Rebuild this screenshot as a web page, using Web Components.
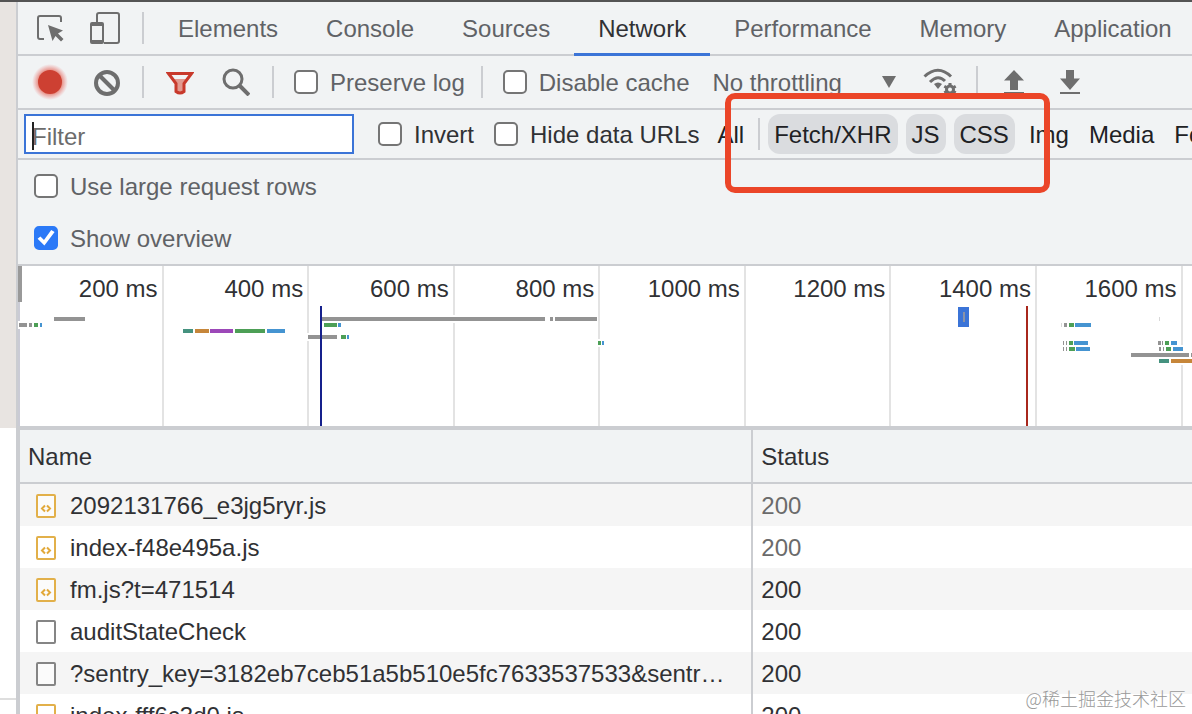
<!DOCTYPE html>
<html lang="en">
<head>
<meta charset="utf-8">
<title>Network</title>
<style>
    body {
        margin: 0;
        height: 100vh;
        overflow: hidden;
        background: #fff;
        font: 24px/28px "Liberation Sans", "Noto Sans CJK SC", sans-serif;
        color: #303134;
        --panel: #f1f3f4;
        --line: #cbcdd1;
        --muted: #606266;
        --icon: #6e6e6e;
        --blue: #3b74d7;
    }
</style>
</head>
<body>
<dev-tools></dev-tools>

<script>
class BaseElement extends HTMLElement {

    rendered = false

    connectedCallback() {
        if (!this.rendered) {
            this.attachShadow({mode: 'open'});
            this.shadowRoot.innerHTML = this.render();
            this.rendered = true;
        }
    }
}

// drawings for <tool-icon name="...">: [width, height, markup]
const ICONS = {
    inspect: [28, 28, `
        <path d="M25 8V4a2 2 0 0 0-2-2H4a2 2 0 0 0-2 2v19a2 2 0 0 0 2 2h4" fill="none" stroke="currentColor" stroke-width="2"/>
        <path d="M12 11l15 5.500-5 3 5.500 5.500-2.500 2.500-5.500-5.500-3 5z" fill="currentColor"/>`],
    device: [32, 32, `
        <path d="M7 11V3a2 2 0 0 1 2-2h18a2 2 0 0 1 2 2v26a2 2 0 0 1-2 2H14" fill="none" stroke="currentColor" stroke-width="2"/>
        <path d="M2 10h10a2 2 0 0 1 2 2v18a2 2 0 0 1-2 2H2a2 2 0 0 1-2-2V12a2 2 0 0 1 2-2zm0 4v14h10V14z" fill="currentColor" fill-rule="evenodd"/>`],
    record: [36, 36, `
        <defs><radialGradient id="g"><stop offset=".66" stop-color="#e0503f" stop-opacity=".6"/><stop offset="1" stop-color="#e66" stop-opacity="0"/></radialGradient></defs>
        <circle cx="18" cy="18" r="18" fill="url(#g)"/>
        <circle cx="18" cy="18" r="12" fill="#cd4032"/>`],
    clear: [28, 28, `
        <g fill="none" stroke="currentColor" stroke-width="4"><circle cx="15" cy="15" r="11"/><path d="M7 7l16 16"/></g>`],
    filter: [28, 28, `
        <path d="M8 11h12l-3 4v8q-3 2-6 0v-8z" fill="#e29a90"/>
        <path d="M2.500 5.500h23l-7.500 10v8q-4 3-8 0v-8z" fill="none" stroke="#c8392b" stroke-width="3"/>`],
    search: [28, 28, `
        <g fill="none" stroke="currentColor"><circle cx="11" cy="11" r="9" stroke-width="3"/><path d="M17 17l10 10" stroke-width="4"/></g>`],
    wifi: [34, 28, `
        <g fill="none" stroke="currentColor" stroke-width="3">
            <path d="M1.500 8.500Q15-4 28 8.500"/><path d="M7 14Q15 6 22 13"/>
            <circle cx="27" cy="21.500" r="3.500"/>
            <path d="M27 15v3M27 25v3M21.300 18.300l2.200 1.200M30.500 23.500l2.200 1.200M21.300 24.700l2.200-1.200M30.500 19.500l2.200-1.200"/>
        </g>
        <path d="M11 16q4-3 8 0l-4 5z" fill="currentColor"/>`],
    upload: [22, 28, `
        <path d="M11 2l10 10.500h-6V22H7v-9.500H1zM1 24h20v2H1z" fill="currentColor"/>`],
    download: [22, 28, `
        <path d="M7 2h8v8.500h6L11 22 1 10.500h6zM1 24h20v2H1z" fill="currentColor"/>`],
    script: [20, 24, `
        <rect x="1" y="1" width="18" height="22" rx="1" fill="#fff" fill-opacity=".6" stroke="#e2b04a" stroke-width="2"/>
        <path d="M9 11.500l-3 3 3 3M11 11.500l3 3-3 3" fill="none" stroke="#e2a93a" stroke-width="2"/>`],
    file: [20, 24, `
        <rect x="1" y="1" width="18" height="22" rx="1" fill="#fff" fill-opacity=".6" stroke="#858585" stroke-width="2"/>`],
};

class ToolIcon extends BaseElement {
    render() {
        const [width, height, markup] = ICONS[this.getAttribute('name')];
        return `
            <style>
                :host { display: inline-flex; }
                svg { display: block; }
            </style>
            <svg width="${width}" height="${height}" viewBox="0 0 ${width} ${height}" aria-hidden="true">${markup}</svg>
        `;
    }
}

class ToolButton extends BaseElement {
    render() {
        return `
            <style>
                :host { display: flex; flex: none; color: var(--icon); }
                button {
                    display: flex; align-items: center; justify-content: center;
                    width: 40px; height: 40px; padding: 0;
                    border: 0; background: none; color: inherit;
                }
            </style>
            <button type="button" aria-label="${this.getAttribute('label')}">
                <tool-icon name="${this.getAttribute('icon')}"></tool-icon>
            </button>
        `;
    }
}

class CheckBox extends BaseElement {
    render() {
        return `
            <style>
                :host { display: flex; flex: none; }
                label { display: flex; align-items: center; gap: 12px; white-space: nowrap; }
                span { padding-top: 2px; }
                input {
                    appearance: none; box-sizing: border-box; flex: none;
                    width: 24px; height: 24px; margin: 0;
                    border: 2px solid #757575; border-radius: 5px; background: #fff;
                }
                input:checked { border-color: #2b79f7; background: #2b79f7; }
                input:checked::before {
                    content: ""; display: block; height: 20px; background: #fff;
                    clip-path: polygon(8% 54%, 22% 43%, 40% 60%, 76% 10%, 93% 20%, 42% 88%);
                }
            </style>
            <label><input type="checkbox" ${this.hasAttribute('checked') ? 'checked' : ''}><span><slot></slot></span></label>
        `;
    }
}

class ToolDivider extends BaseElement {
    render() {
        return `<style>:host { display: block; flex: none; width: 2px; height: 32px; background: var(--line); }</style>`;
    }
}

class PanelTab extends BaseElement {
    render() {
        return `
            <style>
                :host { display: flex; flex: none; }
                button {
                    height: 54px; margin-bottom: -2px; padding: 2px 24px 0;
                    border: 0; border-bottom: 3px solid transparent;
                    background: none; color: var(--muted); font: inherit;
                }
                :host([selected]) button { color: #303134; border-color: var(--blue); }
            </style>
            <button type="button" role="tab" aria-selected="${this.hasAttribute('selected')}"><slot></slot></button>
        `;
    }
}

class TypeChip extends BaseElement {
    render() {
        return `
            <style>
                :host { display: flex; flex: none; }
                button {
                    height: 40px; padding: 2px 6px 0; border: 0; border-radius: 12px;
                    background: none; color: #202124; font: inherit;
                }
                :host([selected]) button { background: #dadcdf; }
            </style>
            <button type="button" aria-pressed="${this.hasAttribute('selected')}"><slot></slot></button>
        `;
    }
}

class TabStrip extends BaseElement {
    render() {
        return `
            <style>
                :host {
                    display: flex; align-items: center; height: 52px; padding-left: 12px;
                    border-bottom: 2px solid var(--line);
                }
                .tools { display: flex; align-items: center; gap: 16px; margin-right: 10px; }
                nav { display: flex; }
            </style>
            <div class="tools">
                <tool-button icon="inspect" label="Inspect element"></tool-button>
                <tool-button icon="device" label="Toggle device toolbar"></tool-button>
                <tool-divider></tool-divider>
            </div>
            <nav role="tablist"><slot></slot></nav>
        `;
    }
}

class NetworkToolbar extends BaseElement {
    render() {
        return `
            <style>
                :host {
                    display: flex; align-items: center; gap: 20px; height: 52px; padding-left: 12px;
                    border-bottom: 2px solid var(--line); color: var(--muted);
                }
                .group { display: flex; flex: none; align-items: center; gap: 16px; }
                .throttle { display: grid; align-items: center; width: 184px; margin: 0 8px 0 3px; }
                select, .throttle svg { grid-area: 1 / 1; }
                select {
                    appearance: none; width: 100%; height: 40px; padding: 2px 0 0;
                    border: 0; background: none; color: inherit; font: inherit;
                }
                .throttle svg { justify-self: end; pointer-events: none; fill: var(--icon); }
            </style>
            <div class="group">
                <tool-button icon="record" label="Stop recording"></tool-button>
                <tool-button icon="clear" label="Clear"></tool-button>
                <tool-divider></tool-divider>
                <tool-button icon="filter" label="Filter"></tool-button>
                <tool-button icon="search" label="Search"></tool-button>
                <tool-divider></tool-divider>
            </div>
            <div class="group">
                <check-box>Preserve log</check-box>
                <tool-divider></tool-divider>
            </div>
            <check-box>Disable cache</check-box>
            <div class="group">
                <div class="throttle">
                    <select aria-label="Throttling"><option>No throttling</option></select>
                    <svg width="14" height="12" viewBox="0 0 14 12"><path d="M0 0h14L7 12z"/></svg>
                </div>
                <tool-button icon="wifi" label="Network conditions"></tool-button>
                <tool-divider></tool-divider>
                <tool-button icon="upload" label="Import HAR file"></tool-button>
                <tool-button icon="download" label="Export HAR file"></tool-button>
            </div>
        `;
    }
}

class FilterBar extends BaseElement {
    render() {
        return `
            <style>
                :host {
                    display: flex; align-items: center; height: 48px; padding-left: 6px;
                    border-bottom: 2px solid var(--line);
                }
                .field { display: grid; flex: none; align-items: center; margin-right: 24px; }
                .field > * { grid-area: 1 / 1; }
                input {
                    box-sizing: border-box; width: 330px; height: 40px; padding: 6px 6px 0;
                    border: 2px solid var(--blue); border-radius: 0; outline: 0;
                    background: #fff; color: inherit; font: inherit;
                }
                input::placeholder { color: #6c6c6c; opacity: 1; }
                .caret { width: 2px; height: 28px; margin: 4px 0 0 8px; background: #222; }
                .checks { display: flex; flex: none; gap: 20px; margin-right: 12px; }
                .types { display: flex; flex: none; align-items: center; gap: 8px; }
            </style>
            <div class="field">
                <input type="text" placeholder="Filter" aria-label="Filter">
                <span class="caret"></span>
            </div>
            <div class="checks">
                <check-box>Invert</check-box>
                <check-box>Hide data URLs</check-box>
            </div>
            <div class="types"><slot></slot></div>
        `;
    }
}

class SettingsPane extends BaseElement {
    render() {
        return `
            <style>
                :host {
                    display: grid; grid-auto-rows: 52px; align-items: center; padding-left: 16px;
                    border-bottom: 2px solid var(--line); color: var(--muted);
                }
            </style>
            <slot></slot>
        `;
    }
}

const COLORS = {
    gray: '#939393',
    pale: '#d8d8d8',
    teal: '#45927f',
    orange: '#c6863a',
    purple: '#9c48b8',
    green: '#4d9f56',
    blue: '#4594d1',
};

// request bars: top, then [colour, from, to] pieces
const BARS = [
    [51, ['gray', 36, 67], ['gray', 304, 527], ['gray', 532, 535], ['gray', 537, 579], ['pale', 1141, 1142]],
    [57, ['gray', 1, 9], ['gray', 11, 14], ['green', 16, 20], ['blue', 22, 24],
        ['green', 306, 319], ['blue', 320, 323],
        ['pale', 1043, 1044], ['gray', 1046, 1049], ['green', 1051, 1056], ['blue', 1057, 1073]],
    [63, ['teal', 165, 175], ['orange', 177, 191], ['purple', 192, 215], ['green', 217, 247], ['blue', 249, 267]],
    [69, ['gray', 290, 319], ['green', 323, 328], ['blue', 329, 331]],
    [75, ['green', 580, 583], ['blue', 584, 586],
        ['gray', 1045, 1046], ['gray', 1048, 1049], ['green', 1051, 1055], ['blue', 1056, 1070],
        ['gray', 1140, 1143], ['gray', 1144, 1145], ['green', 1147, 1151], ['blue', 1153, 1159]],
    [81, ['gray', 1045, 1046], ['gray', 1048, 1049], ['green', 1051, 1057], ['blue', 1058, 1072],
        ['gray', 1141, 1143], ['gray', 1145, 1146], ['green', 1148, 1153], ['blue', 1155, 1165]],
    [87, ['gray', 1113, 1171], ['gray', 1173, 1174]],
    [93, ['teal', 1141, 1151], ['orange', 1153, 1174]],
];

class TimelineOverview extends BaseElement {
    render() {
        const times = [200, 400, 600, 800, 1000, 1200, 1400, 1600];
        const pieces = BARS.flatMap(([y, ...parts]) => parts.map(([color, from, to]) => ({y, color, from, to})));
        const halo = pieces.map(p => `<rect x="${p.from - 1}" y="${p.y - 2}" width="${p.to - p.from + 2}" height="8" fill="#fff"/>`);
        const bars = pieces.map(p => `<rect x="${p.from}" y="${p.y}" width="${p.to - p.from}" height="4" fill="${COLORS[p.color]}"/>`);

        return `
            <style>
                :host {
                    display: grid; height: 160px; background: #fff;
                    border-bottom: 4px solid var(--line);
                }
                .scale, svg { grid-area: 1 / 1; min-width: 0; }
                .scale { display: grid; grid-template-columns: repeat(8, 12.4%); }
                .scale span {
                    padding: 9px 4px 0 0; border-right: 2px solid #e3e3e3;
                    text-align: right; white-space: nowrap;
                }
                svg { width: 100%; height: 160px; }
            </style>
            <div class="scale">${times.map(t => `<span>${t} ms</span>`).join('')}</div>
            <svg viewBox="0 0 1174 160" preserveAspectRatio="none" shape-rendering="crispEdges">
                <rect width="2" height="160" fill="#cacbd5"/>
                <rect width="4" height="36" fill="#999"/>
                ${halo.join('')}${bars.join('')}
                <rect x="940" y="41" width="11" height="20" fill="#3b74d7"/>
                <rect x="945" y="46" width="2" height="10" fill="#8a93a8"/>
                <rect x="302" y="40" width="2" height="120" fill="#15208c"/>
                <rect x="1008" y="40" width="2" height="120" fill="#a8271c"/>
            </svg>
        `;
    }
}

const REQUESTS = [
    {icon: 'script', name: '2092131766_e3jg5ryr.js', status: 200, cached: true},
    {icon: 'script', name: 'index-f48e495a.js', status: 200, cached: true},
    {icon: 'script', name: 'fm.js?t=471514', status: 200},
    {icon: 'file', name: 'auditStateCheck', status: 200},
    {icon: 'file', name: '?sentry_key=3182eb7ceb51a5b510e5fc7633537533&amp;sentr…', status: 200},
    {icon: 'script', name: 'index-fff6c3d0.js', status: 200},
];

class RequestTable extends BaseElement {
    render() {
        const rows = REQUESTS.map(r => `
            <tr>
                <td><div class="name"><tool-icon name="${r.icon}"></tool-icon><span>${r.name}</span></div></td>
                <td class="${r.cached ? 'cached' : ''}">${r.status}</td>
            </tr>`);

        return `
            <style>
                :host { display: block; border-left: 2px solid var(--line); background: #fff; }
                table { width: 100%; table-layout: fixed; border-spacing: 0; }
                th, td { box-sizing: border-box; padding: 2px 8px 0; text-align: left; }
                th { height: 54px; background: var(--panel); border-bottom: 2px solid var(--line); font-weight: normal; }
                th:first-child { width: 62.4%; }
                th + th, td + td { border-left: 2px solid var(--line); }
                td { height: 42px; }
                tbody tr:nth-child(odd) { background: #f5f5f5; }
                .name { display: flex; align-items: center; gap: 14px; padding-left: 8px; white-space: nowrap; }
                .cached { color: #6b6b6b; }
            </style>
            <table>
                <thead><tr><th scope="col">Name</th><th scope="col">Status</th></tr></thead>
                <tbody>${rows.join('')}</tbody>
            </table>
        `;
    }
}

class DevTools extends BaseElement {
    render() {
        return `
            <style>
                :host {
                    display: grid; grid-template-columns: 16px minmax(0, 1fr);
                    box-sizing: border-box; height: 100vh; overflow: hidden;
                    border-top: 2px solid #545454;
                }
                /* edge of the inspected page */
                aside { display: grid; grid-template-rows: 426px 272px 1fr; }
                .hero { background: #e8e4e1; }
                .blank { border-bottom: 2px solid #dedede; }
                main { border-left: 2px solid var(--line); background: var(--panel); overflow: hidden; }
                .highlight {
                    position: absolute; left: 725px; top: 93px; box-sizing: border-box;
                    width: 325px; height: 100px; border: 6px solid #eb4528; border-radius: 10px;
                    pointer-events: none;
                }
                .mark {
                    position: absolute; right: 6px; bottom: 2px;
                    font: 300 18px/28px "Noto Sans CJK SC", sans-serif; color: #999;
                }
            </style>
            <aside><div class="hero"></div><div class="blank"></div></aside>
            <main>
                <tab-strip>
                    <panel-tab>Elements</panel-tab>
                    <panel-tab>Console</panel-tab>
                    <panel-tab>Sources</panel-tab>
                    <panel-tab selected>Network</panel-tab>
                    <panel-tab>Performance</panel-tab>
                    <panel-tab>Memory</panel-tab>
                    <panel-tab>Application</panel-tab>
                </tab-strip>
                <network-toolbar></network-toolbar>
                <filter-bar>
                    <type-chip>All</type-chip>
                    <tool-divider></tool-divider>
                    <type-chip selected>Fetch/XHR</type-chip>
                    <type-chip selected>JS</type-chip>
                    <type-chip selected>CSS</type-chip>
                    <type-chip>Img</type-chip>
                    <type-chip>Media</type-chip>
                    <type-chip>Font</type-chip>
                </filter-bar>
                <settings-pane>
                    <check-box>Use large request rows</check-box>
                    <check-box checked>Show overview</check-box>
                </settings-pane>
                <timeline-overview></timeline-overview>
                <request-table></request-table>
            </main>
            <div class="highlight"></div>
            <div class="mark">@稀土掘金技术社区</div>
        `;
    }
}

customElements.define('tool-icon', ToolIcon);
customElements.define('tool-button', ToolButton);
customElements.define('tool-divider', ToolDivider);
customElements.define('check-box', CheckBox);
customElements.define('panel-tab', PanelTab);
customElements.define('type-chip', TypeChip);
customElements.define('tab-strip', TabStrip);
customElements.define('network-toolbar', NetworkToolbar);
customElements.define('filter-bar', FilterBar);
customElements.define('settings-pane', SettingsPane);
customElements.define('timeline-overview', TimelineOverview);
customElements.define('request-table', RequestTable);
customElements.define('dev-tools', DevTools);
</script>
</body>
</html>
